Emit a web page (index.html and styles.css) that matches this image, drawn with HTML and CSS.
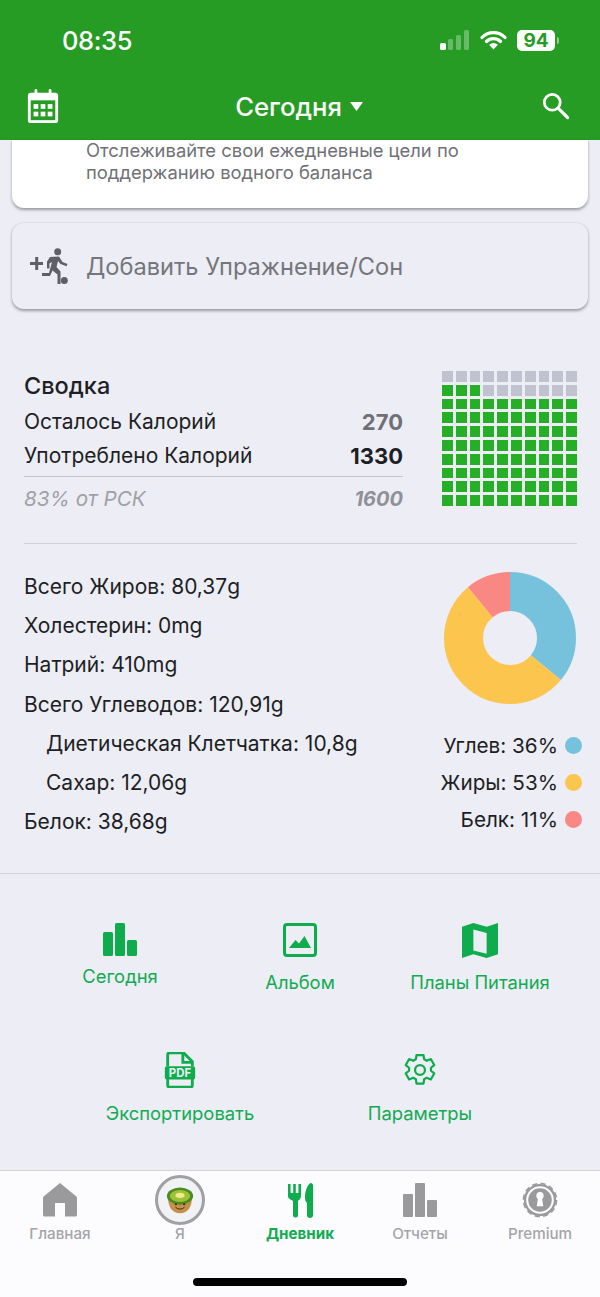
FILE: index.html
```html
<!DOCTYPE html>
<html lang="ru">
<head>
<meta charset="utf-8">
<title>Дневник</title>
<link rel="stylesheet" href="styles.css">
</head>
<body>
<div class="phone">
  <header class="header">
    <div class="status">
      <span class="time">08:35</span>
      <div class="status-icons">
        <svg class="signal" width="30" height="20" viewBox="0 0 30 20"><rect x="0" y="13" width="6" height="7" rx="1.5" fill="#fff"/><rect x="8" y="9" width="5" height="11" rx="1.5" fill="#fff" opacity=".3"/><rect x="16" y="5" width="5" height="15" rx="1.5" fill="#fff" opacity=".3"/><rect x="24" y="0" width="5" height="20" rx="1.5" fill="#fff" opacity=".3"/></svg>
        <svg class="wifi" width="27" height="20" viewBox="0 0 27 20"><path d="M2 7.5a16 16 0 0 1 23 0M6.5 11.5a10 10 0 0 1 14 0" fill="none" stroke="#fff" stroke-width="3.2" stroke-linecap="round"/><path d="M13.5 19.5l-4.4-4.7a6 6 0 0 1 8.800 0z" fill="#fff"/></svg>
        <div class="battery"><span class="battery-level">94</span><span class="battery-cap"></span></div>
      </div>
    </div>
    <nav class="nav">
      <svg class="cal" width="34" height="34" viewBox="0 0 34 36"><path fill="#fff" d="M4 4h4V1.500a1.500 1.500 0 0 1 3 0V4h12V1.500a1.500 1.500 0 0 1 3 0V4h4a3 3 0 0 1 3 3v26a3 3 0 0 1-3 3H4a3 3 0 0 1-3-3V7a3 3 0 0 1 3-3z"/><rect x="4" y="12" width="26" height="21" fill="#269c24"/><g fill="#fff"><rect x="7" y="16" width="5" height="5"/><rect x="14.500" y="16" width="5" height="5"/><rect x="22" y="16" width="5" height="5"/><rect x="7" y="24" width="5" height="5"/><rect x="14.500" y="24" width="5" height="5"/><rect x="22" y="24" width="5" height="5"/></g></svg>
      <div class="nav-title"><span>Сегодня</span><svg width="13" height="9" viewBox="0 0 13 9"><path d="M0 0h13L6.500 9z" fill="#fff"/></svg></div>
      <svg class="search" width="28" height="28" viewBox="0 0 30 30"><circle cx="11" cy="11" r="8.500" fill="none" stroke="#fff" stroke-width="3"/><path d="M17.500 17.500L27.500 27.500" stroke="#fff" stroke-width="3.400" stroke-linecap="round"/></svg>
    </nav>
  </header>

  <main class="content">
    <section class="card card-water">
      <p>Отслеживайте свои ежедневные цели по поддержанию водного баланса</p>
    </section>
    <section class="card card-add">
      <svg class="run" width="40" height="38" viewBox="0 0 40 38" fill="#5f6066"><path d="M1 15h5.200v-5h3v5H14v3H9.200v5h-3v-5H1z"/><circle cx="28.700" cy="4.700" r="3.500"/><path d="M21 10l9-.5 3.500 5.500 5 2-1 2.300-6-2.200-2.500-3-1.500 6 4 4.500V37h-3v-9.500l-5-4-2.500 5.500H13v-3h7l3-11-2.500 1.500v5H18v-7z"/><circle cx="35.300" cy="33.500" r="3.500"/></svg>
      <span>Добавить Упражнение/Сон</span>
    </section>

    <section class="summary">
      <div class="summary-text">
        <h2>Сводка</h2>
        <div class="row"><span>Осталось Калорий</span><b class="muted">270</b></div>
        <div class="row row-total"><span>Употреблено Калорий</span><b>1330</b></div>
        <div class="row row-rdi"><i>83% от РСК</i><b><i>1600</i></b></div>
      </div>
      <div class="waffle" id="waffle">
        <i class="off"></i><i class="off"></i><i class="off"></i><i class="off"></i><i class="off"></i><i class="off"></i><i class="off"></i><i class="off"></i><i class="off"></i><i class="off"></i>
        <i></i><i></i><i></i><i class="off"></i><i class="off"></i><i class="off"></i><i class="off"></i><i class="off"></i><i class="off"></i><i class="off"></i>
        <i></i><i></i><i></i><i></i><i></i><i></i><i></i><i></i><i></i><i></i>
        <i></i><i></i><i></i><i></i><i></i><i></i><i></i><i></i><i></i><i></i>
        <i></i><i></i><i></i><i></i><i></i><i></i><i></i><i></i><i></i><i></i>
        <i></i><i></i><i></i><i></i><i></i><i></i><i></i><i></i><i></i><i></i>
        <i></i><i></i><i></i><i></i><i></i><i></i><i></i><i></i><i></i><i></i>
        <i></i><i></i><i></i><i></i><i></i><i></i><i></i><i></i><i></i><i></i>
        <i></i><i></i><i></i><i></i><i></i><i></i><i></i><i></i><i></i><i></i>
        <i></i><i></i><i></i><i></i><i></i><i></i><i></i><i></i><i></i><i></i>
      </div>
    </section>

    <hr class="rule">

    <section class="nutrition">
      <ul class="nutrients">
        <li>Всего Жиров: 80,37g</li>
        <li>Холестерин: 0mg</li>
        <li>Натрий: 410mg</li>
        <li>Всего Углеводов: 120,91g</li>
        <li class="sub">Диетическая Клетчатка: 10,8g</li>
        <li class="sub">Сахар: 12,06g</li>
        <li>Белок: 38,68g</li>
      </ul>
      <div class="macros">
        <svg class="pie" width="134" height="134" viewBox="0 0 134 134">
          <g fill="none" stroke-width="39" transform="rotate(-90 67 67)">
            <circle cx="67" cy="67" r="46.500" pathLength="100" stroke="#76c2dd" stroke-dasharray="36 64"/>
            <circle cx="67" cy="67" r="46.500" pathLength="100" stroke="#fcc54e" stroke-dasharray="53 47" stroke-dashoffset="-36"/>
            <circle cx="67" cy="67" r="46.500" pathLength="100" stroke="#f98783" stroke-dasharray="11 89" stroke-dashoffset="-89"/>
          </g>
        </svg>
        <ul class="legend">
          <li>Углев: 36%<span class="dot dot-carb"></span></li>
          <li>Жиры: 53%<span class="dot dot-fat"></span></li>
          <li>Белк: 11%<span class="dot dot-prot"></span></li>
        </ul>
      </div>
    </section>

    <section class="menu">
      <div class="menu-row">
        <a class="tile tile-tight">
          <svg width="36" height="36" viewBox="0 0 36 36" fill="#0fac4d"><rect x="1" y="10" width="10" height="24" rx="1.500"/><rect x="13" y="1" width="10" height="33" rx="1.500"/><rect x="25" y="18" width="10" height="16" rx="1.500"/></svg>
          <span>Сегодня</span>
        </a>
        <a class="tile">
          <svg width="36" height="36" viewBox="0 0 36 36"><rect x="2.500" y="2.500" width="31" height="31" rx="2.500" fill="none" stroke="#0fac4d" stroke-width="3"/><path d="M7 26l6.500-8 3.500 3.500 5.500-7.500L29 26z" fill="#0fac4d"/></svg>
          <span>Альбом</span>
        </a>
        <a class="tile">
          <svg width="40" height="36" viewBox="0 0 40 38" fill="#0fac4d"><path d="M1 5l12-4 14 4 12-4v33l-12 4-14-4-12 4zM13 8v22l14 3.500V11.500z" fill-rule="evenodd"/></svg>
          <span>Планы Питания</span>
        </a>
      </div>
      <div class="menu-row menu-row-two">
        <a class="tile">
          <svg width="36" height="36" viewBox="0 0 36 38"><path d="M5 15V3a2 2 0 0 1 2-2h15l9 9v5M5 28v7a2 2 0 0 0 2 2h22a2 2 0 0 0 2-2v-7" fill="none" stroke="#0fac4d" stroke-width="3"/><path d="M21 2v9h9" fill="none" stroke="#0fac4d" stroke-width="3"/><rect x="2" y="15" width="32" height="14" rx="2" fill="#0fac4d"/><text x="18" y="26.500" class="pdf">PDF</text></svg>
          <span>Экспортировать</span>
        </a>
        <a class="tile">
          <svg width="36" height="36" viewBox="0 0 24 24"><path d="M9.700 2h4.600l.5 2.900 1.700.9 2.700-1.100 2.300 4-2.200 1.800v2l2.200 1.800-2.300 4-2.700-1.100-1.700.9-.5 2.900H9.700l-.5-2.900-1.700-.9-2.700 1.100-2.300-4 2.200-1.800v-2L2.500 8.700l2.300-4 2.700 1.100 1.700-.9z" fill="none" stroke="#0fac4d" stroke-width="1.500" stroke-linejoin="round"/><circle cx="12" cy="12" r="3.300" fill="none" stroke="#0fac4d" stroke-width="1.500"/></svg>
          <span>Параметры</span>
        </a>
      </div>
    </section>
  </main>

  <footer class="tabbar">
    <div class="tabs">
      <a class="tab">
        <svg width="36" height="36" viewBox="0 0 36 36" fill="#9a9a9c"><path d="M18 1L35 15v18a1.500 1.500 0 0 1-1.500 1.500H23V21H13v13.500H2.500A1.500 1.500 0 0 1 1 33V15z"/></svg>
        <span>Главная</span>
      </a>
      <a class="tab">
        <span class="avatar">
          <svg width="28" height="27" viewBox="0 0 36 36"><path d="M2 13c0 13 5 22 16 22s16-9 16-22z" fill="#c4904a"/><ellipse cx="18" cy="12" rx="17.500" ry="11.500" fill="#4f8a1f"/><ellipse cx="18" cy="12" rx="13.500" ry="8" fill="#9cc23a"/><ellipse cx="18" cy="11" rx="6" ry="3.500" fill="#f4e98c"/><circle cx="12.500" cy="23" r="1.400" fill="#3f2a12"/><circle cx="23.500" cy="23" r="1.400" fill="#3f2a12"/><path d="M12 27q6 5 12 0" fill="none" stroke="#3f2a12" stroke-width="1.300"/></svg>
        </span>
        <span>Я</span>
      </a>
      <a class="tab tab-active">
        <svg width="36" height="36" viewBox="0 0 36 36" fill="#0fac4d"><path d="M6 2h2.600v9h2.600V2h2.600v9h2.600V2H19v12c0 2.500-1.500 4-3 4.800V33a2.500 2.500 0 0 1-5 0V18.800C9 18 6 16.500 6 14z"/><path d="M31 3a2 2 0 0 0-3.500-1.200C25 4 23 10 23 15c0 3 .5 5 2 6v12a3 3 0 0 0 6 0z"/></svg>
        <span>Дневник</span>
      </a>
      <a class="tab">
        <svg width="36" height="36" viewBox="0 0 36 36" fill="#9a9a9c"><rect x="1" y="12" width="10" height="23" rx="1"/><rect x="13" y="1" width="10" height="34" rx="1"/><rect x="25" y="18" width="10" height="17" rx="1"/></svg>
        <span>Отчеты</span>
      </a>
      <a class="tab">
        <svg width="38" height="36" viewBox="0 0 38 38"><circle cx="19" cy="19" r="17" fill="#9a9a9c"/><circle cx="19" cy="19" r="17.500" fill="none" stroke="#9a9a9c" stroke-width="1.600" stroke-dasharray="5.600 3.560"/><circle cx="19" cy="19" r="13.500" fill="none" stroke="#fcfcfe" stroke-width="2.200"/><circle cx="19" cy="14.500" r="3.900" fill="#fcfcfe"/><path d="M17 16.500h4l1.500 9h-7z" fill="#fcfcfe"/></svg>
        <span>Premium</span>
      </a>
    </div>
    <div class="home-indicator"></div>
  </footer>
</div>
</body>
</html>
```

FILE: styles.css
```css
* { box-sizing: border-box; }
html, body { margin: 0; padding: 0; }
body { font-family: Inter, "Liberation Sans", sans-serif; color: #1e1f24; background: #ecedf5; }
ul { list-style: none; margin: 0; padding: 0; }
h2, p { margin: 0; }
svg { display: block; flex: none; }

.phone { width: 600px; height: 1297px; display: flex; flex-direction: column; overflow: hidden; background: #ecedf5; }

.header { height: 140px; flex: none; background: #269c24; color: #fff; }
.status { height: 80px; padding: 0 45px 0 62px; display: flex; align-items: center; justify-content: space-between; }
.time { font-size: 25.500px; font-weight: 500; letter-spacing: -.4px; }
.status-icons { display: flex; align-items: center; gap: 10px; }
.battery { position: relative; width: 38px; height: 21px; background: #fff; border-radius: 5px; color: #269c24; font-size: 19px; font-weight: 700; line-height: 21px; text-align: center; }
.battery-cap { position: absolute; left: 40px; top: 7px; width: 2px; height: 7px; border-radius: 0 2px 2px 0; background: rgba(255,255,255,.5); }

.nav { height: 60px; padding: 0 30px 8px 26px; display: flex; align-items: center; justify-content: space-between; }
.nav-title { display: flex; align-items: center; gap: 8px; font-size: 25.700px; font-weight: 500; margin-right: 4px; }

.content { flex: 1; min-height: 0; display: flex; flex-direction: column; }
.content > * { flex: none; }
.card { margin: 0 12px; border-radius: 12px; box-shadow: 0 1.500px 3px rgba(0,0,0,.35); }
.card-water { height: 68px; background: #fff; border-radius: 0 0 12px 12px; padding: 0 74px; font-size: 18.400px; line-height: 21.500px; color: #707176; }
.card-add { margin-top: 15px; height: 86px; background: #ecedf5; display: flex; align-items: center; gap: 17px; padding-left: 17px; font-size: 23.600px; color: #75767b; }

.summary { margin-top: 61px; padding: 0 23px 0 24px; height: 137px; display: flex; justify-content: space-between; }
.summary-text { width: 379px; }
.summary h2 { font-size: 23.500px; font-weight: 500; line-height: 32px; margin-bottom: 3px; }
.row { display: flex; justify-content: space-between; font-size: 21px; height: 34px; line-height: 34px; }
.row b { font-weight: 700; font-size: 22px; }
.row b.muted { color: #6f7075; }
.row-total { height: 38px; border-bottom: 1px solid #c4c5cc; }
.row-rdi { color: #a0a1a6; height: 44px; line-height: 44px; font-size: 20.700px; }
.row-rdi b { font-size: 20px; color: #909196; }

.waffle { width: 135px; height: 135px; display: grid; grid-template-columns: repeat(10, 1fr); grid-template-rows: repeat(10, 1fr); gap: 3px; margin-top: 1px; }
.waffle i { background: #26ae27; }
.waffle i.off { background: #c1c2cf; }

.rule { margin: 36px 23px 0 24px; border: 0; border-top: 1px solid #d2d3da; }

.nutrition { padding: 23px 18px 0 24px; height: 330px; display: flex; justify-content: space-between; border-bottom: 1px solid #d2d3da; }
.nutrients li { font-size: 21px; line-height: 39.200px; white-space: nowrap; }
.nutrients li.sub { padding-left: 22px; }
.macros { width: 140px; display: flex; flex-direction: column; align-items: flex-end; }
.pie { margin: 4px 5px 0 0; }
.legend { margin-top: 22px; }
.legend li { display: flex; align-items: center; justify-content: flex-end; gap: 7px; height: 37px; font-size: 20.700px; white-space: nowrap; }
.dot { width: 17px; height: 17px; border-radius: 50%; }
.dot-carb { background: #76c2dd; }
.dot-fat { background: #fcc54e; }
.dot-prot { background: #f98783; }

.menu { padding-top: 48px; }
.menu-row { display: flex; padding: 0 30px; height: 130px; }
.menu-row-two { padding: 0 60px; height: 118px; }
.tile { flex: 1; display: flex; flex-direction: column; align-items: center; color: #12ab52; font-size: 18.400px; }
.tile span { margin-top: 12px; line-height: 24px; }
.menu-row-two .tile span { margin-top: 13px; }
.tile-tight span { margin-top: 6px; }
.pdf { font: 700 12px Inter, "Liberation Sans", sans-serif; fill: #ecedf5; text-anchor: middle; }

.tabbar { height: 127px; flex: none; background: #fcfcfe; border-top: 1px solid #d5d5d8; position: relative; }
.tabs { display: flex; padding-top: 11px; }
.tab { flex: 1; height: 66px; display: flex; flex-direction: column; align-items: center; color: #a4a5a8; font-size: 15.200px; font-weight: 500; }
.tab > span:last-child { margin-top: 6px; line-height: 20px; }
.tab-active { color: #12ab52; font-weight: 700; }
.avatar { width: 50px; height: 50px; margin-top: -7px; border: 3px solid #a0a0a2; border-radius: 50%; background: #f1f2f6; display: flex; align-items: center; justify-content: center; }
.tab > .avatar + span { margin-top: -1px; }
.home-indicator { position: absolute; left: 193px; top: 107px; width: 214px; height: 8px; border-radius: 4px; background: #000; }
```
